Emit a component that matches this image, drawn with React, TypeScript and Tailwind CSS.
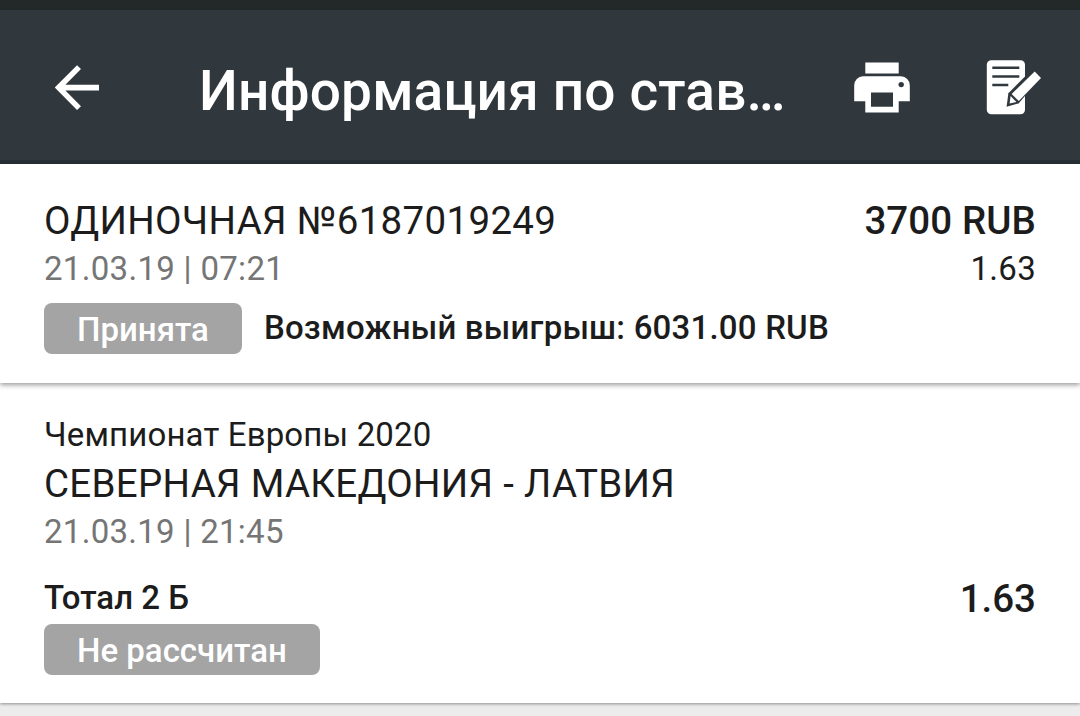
import type { ReactNode } from "react";

const BackIcon = () => (
  <svg width="46" height="46" viewBox="0 0 46 46" fill="none">
    <path d="M24 2.1 3.7 22.6 24 43.1M4 22.6H44" stroke="#fff" strokeWidth="5.6" />
  </svg>
);

const PrintIcon = () => (
  <svg width="56" height="52" viewBox="0 0 56 52">
    <path
      fill="#fff"
      fillRule="evenodd"
      d="M11.3 .4H44.7V11.6H11.3ZM9 14.2H47A9 9 0 0 1 55.8 23.2V39.3H44.7V50.4H11.3V39.3H.2V23.2A9 9 0 0 1 9 14.2ZM17 30.6V44.7H39V30.6Z"
    />
    <circle cx="47.2" cy="22.6" r="2.7" fill="#30383e" />
  </svg>
);

const EditIcon = () => (
  <svg width="56" height="56" viewBox="0 0 56 56">
    <rect x=".8" y=".3" width="38.2" height="54" rx="4.5" fill="#fff" />
    <path d="M6.3 7.8H33.3M6.3 16.5H33.3M6.3 25H22.3" stroke="#30383e" strokeWidth="2.5" />
    <path d="M22.4 33.2 40 15.4V34.8L32.6 43.4 20.6 46.7Z" fill="#30383e" />
    <path d="M48.7 11.6 55 18.1 32.8 41.1 25.6 34Z" fill="#fff" />
    <path d="M24.6 36 30.4 42 23.6 43.6Z" fill="#fff" />
  </svg>
);

const Badge = ({ children }: { children: ReactNode }) => (
  <span className="flex h-[51px] items-center rounded-[8px] bg-[#a4a4a4] px-[33px] pt-[2px] text-[33px] font-medium text-white">
    {children}
  </span>
);

export default function App() {
  return (
    <div className="flex h-[716px] w-[1080px] flex-col overflow-hidden whitespace-nowrap bg-[#ececec] font-['Roboto',sans-serif] text-[#1c1c1c]">
      <div className="h-[10px] bg-[#232828]" />
      <header className="flex h-[154px] items-center border-b-4 border-[#273036] bg-[#30383e] pt-[6px] pr-[38px] pl-[55px] text-white">
        <BackIcon />
        <h1 className="ml-[98px] w-[655px] pt-[6px] text-[55px] leading-[64px] font-medium tracking-[0.15px]">
          Информация по став…
        </h1>
        <PrintIcon />
        <div className="ml-[76px]">
          <EditIcon />
        </div>
      </header>

      <section className="relative h-[219px] bg-white px-[44px] pt-[33px] shadow-[0_2px_5px_rgba(0,0,0,0.4)]">
        <div className="flex justify-between text-[38.5px] leading-[48px]">
          <span className="tracking-[0.32px]">ОДИНОЧНАЯ №6187019249</span>
          <span className="font-medium tracking-[0.1px]">3700 RUB</span>
        </div>
        <div className="flex justify-between text-[33px] leading-[48px] tracking-[0.3px]">
          <span className="text-[#757575]">21.03.19 | 07:21</span>
          <span>1.63</span>
        </div>
        <div className="mt-[10px] flex">
          <Badge>Принята</Badge>
          <span className="ml-[22px] text-[33px] leading-[49px] font-medium tracking-[0.2px]">
            Возможный выигрыш: 6031.00 RUB
          </span>
        </div>
      </section>

      <section className="h-[320px] bg-white px-[44px] pt-[28px] shadow-[0_1px_3px_rgba(0,0,0,0.4)]">
        <p className="text-[33px] leading-[48px] tracking-[0.15px]">Чемпионат Европы 2020</p>
        <p className="text-[38.5px] leading-[50px] tracking-[0.29px]">
          СЕВЕРНАЯ МАКЕДОНИЯ - ЛАТВИЯ
        </p>
        <p className="text-[33px] leading-[46px] tracking-[0.28px] text-[#757575]">
          21.03.19 | 21:45
        </p>
        <div className="mt-[19px] flex justify-between font-medium">
          <span className="text-[33px] leading-[48px]">Тотал 2 Б</span>
          <span className="text-[38.5px] leading-[50px]">1.63</span>
        </div>
        <div className="flex">
          <Badge>Не рассчитан</Badge>
        </div>
      </section>
    </div>
  );
}
